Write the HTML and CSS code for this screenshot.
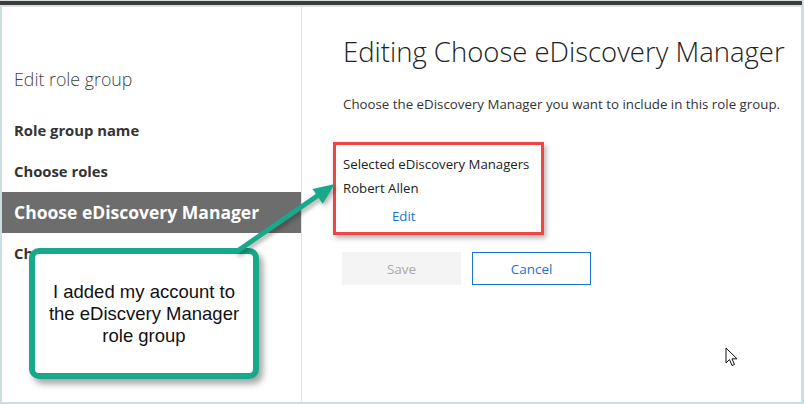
FILE: index.html
```html
<!DOCTYPE html>
<html lang="en">
<head>
<meta charset="utf-8">
<title>Edit role group</title>
<link rel="stylesheet" href="styles.css">
</head>
<body>
<div class="screen">
  <div class="topbar"></div>
  <div class="window">
    <nav class="nav">
      <h2 class="nav-title">Edit role group</h2>
      <ul class="steps">
        <li class="step">Role group name</li>
        <li class="step">Choose roles</li>
        <li class="step active">Choose eDiscovery Manager</li>
        <li class="step">Choose members</li>
      </ul>
    </nav>
    <main class="content">
      <h1 class="title">Editing Choose eDiscovery Manager</h1>
      <p class="desc">Choose the eDiscovery Manager you want to include in this role group.</p>
      <div class="selected">
        <div class="sel-label">Selected eDiscovery Managers</div>
        <div class="sel-name">Robert Allen</div>
        <a class="edit-link" href="#">Edit</a>
      </div>
      <div class="actions">
        <button class="btn btn-save" disabled>Save</button>
        <button class="btn btn-cancel">Cancel</button>
      </div>
    </main>
  </div>

  <div class="callout">
    <p>I added my account to<br>the eDiscvery Manager<br>role group</p>
  </div>

  <svg class="arrow" width="804" height="404" viewBox="0 0 804 404">
    <line x1="236" y1="252" x2="320" y2="194" stroke="#18a98b" stroke-width="5"/>
    <polygon points="335,184 312.5,189 322.7,203.8" fill="#18a98b"/>
  </svg>

  <svg class="cursor" width="14" height="22" viewBox="0 0 14 22">
    <path d="M1 1 L1 16 L4.5 12.5 L7 18.5 L9.5 17.5 L7 11.8 L12 11.8 Z" fill="#fff" stroke="#111" stroke-width="1" stroke-linejoin="round"/>
  </svg>
</div>
</body>
</html>
```

FILE: styles.css
```css
* { box-sizing: border-box; }
html, body { margin: 0; padding: 0; }
body {
  width: 804px;
  height: 404px;
  overflow: hidden;
  background: #c9dfe0;
  font-family: "Open Sans", "Noto Sans", sans-serif;
  color: #333;
}
.screen {
  position: relative;
  width: 804px;
  height: 404px;
  display: flex;
  flex-direction: column;
}
.topbar {
  height: 7px;
  background: #3b3d3e;
  border-top: 1px solid #d8dcdc;
  border-bottom: 2px solid #dedede;
  margin-right: 2px;
}
.window {
  flex: 1;
  display: flex;
  background: #fff;
  margin: 0 3px 2px 2px;
}
.nav {
  width: 300px;
  border-right: 1px solid #e1e1e1;
  padding-top: 59px;
}
.nav-title {
  margin: 0 0 18px 0;
  padding-left: 12px;
  font-size: 17.8px;
  font-weight: 300;
  line-height: 26px;
  color: #444;
}
.steps {
  list-style: none;
  margin: 0;
  padding: 0;
}
.step {
  height: 41px;
  line-height: 41px;
  padding-left: 12px;
  font-size: 14.8px;
  font-weight: 700;
  color: #333;
}
.step.active {
  background: #6d6d6d;
  color: #fff;
  font-size: 17.5px;
}
.content {
  flex: 1;
  padding: 26px 0 0 41px;
}
.title {
  margin: 0;
  font-size: 27.5px;
  font-weight: 300;
  line-height: 38px;
  color: #222;
  white-space: nowrap;
}
.desc {
  margin: 23px 0 0 0;
  font-size: 13.3px;
  line-height: 20px;
  color: #333;
  white-space: nowrap;
}
.selected {
  width: 211px;
  margin: 28px 0 0 -10px;
  border: 3px solid #f04545;
  padding: 7px 0 4px 7px;
  box-shadow: 2px 3px 5px rgba(0,0,0,0.3);
  font-size: 13.2px;
  line-height: 24px;
  color: #222;
}
.edit-link {
  display: block;
  margin-top: 4px;
  padding-left: 49px;
  color: #1a73d1;
  text-decoration: none;
}
.actions {
  display: flex;
  gap: 11px;
  margin: 17px 0 0 -1px;
}
.btn {
  width: 119px;
  height: 33px;
  font-family: inherit;
  font-size: 13.5px;
  background: #fff;
  padding: 0;
}
.btn-save {
  background: #f4f4f4;
  border: 1px solid #f4f4f4;
  color: #a8a8a8;
}
.btn-cancel {
  border: 1px solid #1a73d1;
  color: #1a73d1;
}
.callout {
  position: absolute;
  left: 29px;
  top: 248px;
  width: 230px;
  height: 131px;
  border: 6px solid #18a98b;
  border-radius: 10px;
  background: #fff;
  box-shadow: 4px 5px 6px rgba(0,0,0,0.35);
  display: flex;
  align-items: center;
  justify-content: center;
}
.callout p {
  margin: 0;
  text-align: center;
  font-family: "Liberation Sans", Arial, sans-serif;
  font-size: 18.5px;
  line-height: 22px;
  color: #111;
}
.arrow {
  position: absolute;
  left: 0;
  top: 0;
  pointer-events: none;
  filter: drop-shadow(2px 3px 2px rgba(0,0,0,0.3));
}
.cursor {
  position: absolute;
  left: 725px;
  top: 347px;
}
```
